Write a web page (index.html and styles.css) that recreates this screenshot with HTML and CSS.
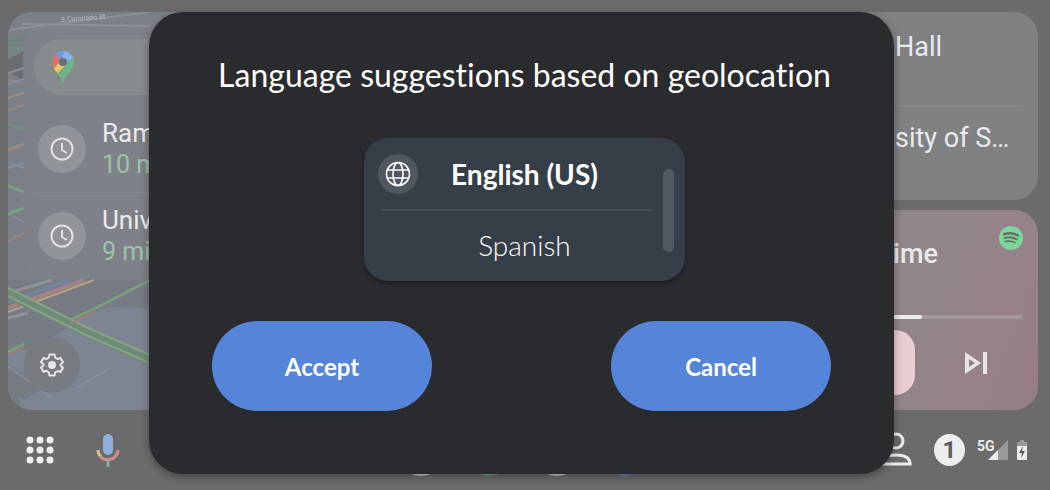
FILE: index.html
```
<!DOCTYPE html>
<html lang="en">
<head>
    <meta charset="UTF-8">
    <meta name="viewport" content="width=device-width, initial-scale=1.0">
    <title>Language suggestions</title>
    <link rel="stylesheet" href="styles.css">
</head>
<body>
    <div class="home">
        <div class="panels">
            <section class="map">
                <svg class="roads" aria-hidden="true" fill="none">
                    <!-- blocks -->
                    <path fill="#7b7f87" d="M0 0H640V270H0z"/>
                    <path fill="#6a6d70" d="M0 47l15-7v28L0 60z"/>
                    <path fill="#72827f" d="M0 28l16-8v18L0 42z"/>
                    <path fill="#777b83" d="M0 268H142V398H0z"/>
                    <path fill="#7e8492" d="M62 314L84 300 104 295 128 296 142 298V398H14L0 352V340L28 336z"/>
                    <path fill="#777b84" d="M0 352l36 24-20 12L0 376z"/>
                    <!-- streets -->
                    <path stroke="#8b9096" stroke-width="2" d="M14 12L142 14M0 18L142 0"/>
                    <path stroke="#708d7f" stroke-width="3" d="M0 36L16 37M0 112l16 5"/>
                    <path stroke="#948e83" stroke-width="2" d="M0 61l16-5M0 86l16-6M0 98l16-5M0 137l16-5"/>
                    <path stroke="#9a827f" stroke-width="2" d="M0 67l16 5M0 139l16-5M0 229l16-8"/>
                    <path stroke="#858c9a" stroke-width="2" d="M0 72l16-5M0 150l16 6M0 156l16-5M4 204l12 6M0 354l44 32M68 376l34-20"/>
                    <path stroke="#76a07e" stroke-width="3" d="M0 174l16 6M0 202l16-6"/>
                    <path stroke="#8d929b" stroke-width="3" d="M0 281L44 268M0 306L20 301"/>
                    <path stroke="#7185a5" stroke-width="3" d="M0 290L62 268"/>
                    <path stroke="#a08485" stroke-width="4" d="M0 296L76 268"/>
                    <path stroke="#b5a47d" stroke-width="2" d="M0 300L86 268"/>
                    <path stroke="#6f8b78" stroke-width="11" d="M0 281L78 320 142 348"/>
                    <path stroke="#83a383" stroke-width="2" d="M0 276L80 316 142 343M0 284L78 323 142 351"/>
                    <path stroke="#a67c7b" stroke-width="2" d="M0 343L16 335M62 312L86 300"/>
                    <path stroke="#77a078" stroke-width="3" d="M0 340L16 332M62 308L92 294 142 268"/>
                    <text class="street" x="53" y="10" transform="rotate(-4 53 10)">S Coronado St</text>
                </svg>
                <div class="places">
                    <button class="search" aria-label="Search maps">
                        <svg width="24" height="34" viewBox="0 0 24 34">
                            <clipPath id="pin"><path d="M12 1a11 11 0 0 1 11 11c0 4-2 7-4.500 10C15.500 25.500 13.500 28 12.500 32q-.5 1-1 0C10.500 28 8.500 25.500 5.500 22 3 19 1 16 1 12A11 11 0 0 1 12 1z"/></clipPath>
                            <g clip-path="url(#pin)">
                                <path fill="#6fb583" d="M0 0h24v34H0z"/>
                                <path fill="#6d9be0" d="M3 0h21v8L12 14 3 5z"/>
                                <path fill="#89b0e9" d="M15 0L24 8l-8 3-5-5z"/>
                                <path fill="#d8736a" d="M0 3l4 1 8 7-9 10H0z"/>
                                <path fill="#e6c565" d="M2 20L10 10l8 6L6 26z"/>
                                <path fill="#6fb583" d="M5 25L23 6v28H5z"/>
                            </g>
                            <circle cx="12" cy="12" r="4" fill="#656d7c"/>
                        </svg>
                    </button>
                    <div class="place">
                        <span class="clock">
                            <svg width="24" height="24" viewBox="0 0 24 24" fill="none" stroke="#dfe1e2" stroke-width="2"><circle cx="12" cy="12" r="10.500"/><path d="M12 6v7l5 3"/></svg>
                        </span>
                        <div>
                            <div class="place-name">Ram</div>
                            <div class="place-time">10 m</div>
                        </div>
                    </div>
                    <div class="place">
                        <span class="clock">
                            <svg width="24" height="24" viewBox="0 0 24 24" fill="none" stroke="#dfe1e2" stroke-width="2"><circle cx="12" cy="12" r="10.500"/><path d="M12 6v7l5 3"/></svg>
                        </span>
                        <div>
                            <div class="place-name">Univ</div>
                            <div class="place-time">9 mi</div>
                        </div>
                    </div>
                </div>
                <button class="settings" aria-label="Settings">
                    <svg width="24" height="24" viewBox="0 0 24 24" fill="none" stroke="#e4e5e7" stroke-width="2" stroke-linejoin="round"><path d="M9.500 1.500h5l.7 3.200 2.300 1.300 3.100-1 2.400 4.200-2.400 2.200v1.200l2.400 2.200-2.400 4.200-3.100-1-2.300 1.300-.7 3.200h-5l-.7-3.200L6.500 17.800l-3.100 1L1 14.600l2.400-2.200v-1.200L1 9.200 3.400 5l3.100 1 2.300-1.300z"/><circle cx="12" cy="12" r="4" fill="#e4e5e7" stroke="none"/></svg>
                </button>
            </section>

            <div class="side">
                <section class="card nearby">
                    <div class="nearby-row">Hall</div>
                    <div class="nearby-row">sity of S…</div>
                </section>
                <section class="card media">
                    <div class="media-head">
                        <div class="song">ime</div>
                        <svg width="24" height="24" viewBox="0 0 24 24" fill="none" stroke="#5f7466" stroke-linecap="round"><circle cx="12" cy="12" r="12" fill="#7fd69b" stroke="none"/><path stroke-width="2.500" d="M5 8.200c5-1.400 10-.9 14 1.300"/><path stroke-width="2" d="M5.500 12c4.500-1.200 8.500-.7 12 1.200"/><path stroke-width="1.700" d="M6 15.500c4-.9 7-.5 10 1.100"/></svg>
                    </div>
                    <progress class="track" value="42" max="100" aria-label="Song position"></progress>
                    <div class="media-controls">
                        <button class="play" aria-label="Play"></button>
                        <button class="next" aria-label="Next song">
                            <svg width="24" height="24" viewBox="0 0 24 24" fill="#e9e5e6"><path fill-rule="evenodd" d="M1 1l16 11L1 23zM5 8v8l6-4z"/><path d="M19 1h4v22h-4z"/></svg>
                        </button>
                    </div>
                </section>
            </div>
        </div>

        <nav class="dock">
            <div class="dock-left">
                <button class="dock-btn" aria-label="All apps">
                    <svg width="28" height="28" viewBox="0 0 28 28" fill="#ededed"><circle cx="4" cy="4" r="3.500"/><circle cx="14" cy="4" r="3.500"/><circle cx="24" cy="4" r="3.500"/><circle cx="4" cy="14" r="3.500"/><circle cx="14" cy="14" r="3.500"/><circle cx="24" cy="14" r="3.500"/><circle cx="4" cy="24" r="3.500"/><circle cx="14" cy="24" r="3.500"/><circle cx="24" cy="24" r="3.500"/></svg>
                </button>
                <button class="dock-btn" aria-label="Assistant">
                    <svg width="24" height="34" viewBox="0 0 24 34" fill="none" stroke-width="3"><rect x="7" y="1" width="10" height="21" rx="5" fill="#91aeda"/><path stroke="#d8c07c" d="M2 17c0 3 1 5 3 7"/><path stroke="#cf8f8a" d="M4 23c4 6 17 5 18-6"/><path stroke="#7cb393" d="M12 28v6"/></svg>
                </button>
            </div>
            <div class="dock-apps">
                <span class="app app-light"></span>
                <span class="app app-green"></span>
                <span class="app app-light"></span>
                <span class="app app-blue"></span>
            </div>
            <div class="dock-status">
                <svg width="34" height="36" viewBox="0 0 34 36" fill="none" stroke="#ececec" stroke-width="3"><circle cx="18" cy="9" r="7"/><path d="M3 32c0-6 6-9 15-9s14 3 14 9z"/></svg>
                <span class="count">1</span>
                <div class="signal">
                    <span class="net">5G</span>
                    <svg width="20" height="20" viewBox="0 0 20 20"><path fill="#999" d="M20 0v20H0z"/><path fill="#ededed" d="M10 10v10H0z"/></svg>
                </div>
                <svg width="10" height="20" viewBox="0 0 10 20"><path fill="#999" d="M3 0h4v2h3v4H0V2h3z"/><path fill="#ededed" d="M0 6h10v13a1 1 0 0 1-1 1H1a1 1 0 0 1-1-1z"/><path fill="#555" d="M6 6L2 13h3l-1 5 4-7H5z"/></svg>
            </div>
        </nav>
    </div>

    <div class="overlay">
        <div class="dialog" role="dialog" aria-labelledby="dialog-title">
            <div class="dialog-body">
                <h1 class="title" id="dialog-title">Language suggestions based on geolocation</h1>
                <div class="languages">
                    <button class="language selected">
                        <span class="globe">
                            <svg width="26" height="26" viewBox="0 0 26 26" fill="none" stroke="#fff" stroke-width="1.600"><circle cx="13" cy="13" r="11.500"/><ellipse cx="13" cy="13" rx="5" ry="11.500"/><path d="M2.500 9h21M2.500 17h21"/></svg>
                        </span>
                        <span class="language-name">English (US)</span>
                    </button>
                    <button class="language">
                        <span class="language-name">Spanish</span>
                    </button>
                    <span class="thumb"></span>
                </div>
            </div>
            <div class="actions">
                <button class="action">Accept</button>
                <button class="action">Cancel</button>
            </div>
        </div>
    </div>
</body>
</html>
```
FILE: styles.css
```
* {
    box-sizing: border-box;
}

body {
    margin: 0;
    background-color: #6b6b6b;
    font-family: Roboto, sans-serif;
    color: #e9eaeb;
}

button {
    border: none;
    padding: 0;
    background: none;
    color: inherit;
    font-family: inherit;
    cursor: pointer;
}

svg {
    display: block;
}

/* home screen behind the dialog */
.home {
    display: flex;
    flex-direction: column;
    min-height: 100vh;
    padding: 12px 12px 0 8px;
}

.panels {
    display: flex;
    flex: 1;
    gap: 10px;
}

.map {
    position: relative;
    flex: 1;
    padding: 15px 0 0 16px;
    border-radius: 24px;
    background-color: #7d8390;
    overflow: hidden;
}

.roads {
    position: absolute;
    top: 0;
    left: 0;
    width: 100%;
    height: 100%;
}

.street {
    font-size: 7px;
    fill: #b9bcc0;
}

.places {
    position: relative;
    padding: 12px 0 0 10px;
    border-radius: 16px;
    background-color: #7e8187;
}

.search {
    display: flex;
    align-items: center;
    width: 100%;
    height: 56px;
    margin-bottom: 10px;
    padding-left: 17px;
    border-radius: 28px;
    background-color: #868b8e;
}

.place {
    display: flex;
    align-items: center;
    gap: 16px;
    height: 87px;
    padding-left: 4px;
}

.place + .place {
    border-top: 1px solid #84878c;
}

.clock {
    display: flex;
    align-items: center;
    justify-content: center;
    width: 48px;
    height: 48px;
    border-radius: 50%;
    background-color: #919498;
}

.place-name,
.place-time {
    font-size: 26px;
    line-height: 32px;
}

.place-time {
    font-size: 25px;
    color: #9fc2aa;
}

.settings {
    position: relative;
    display: flex;
    align-items: center;
    justify-content: center;
    width: 56px;
    height: 56px;
    margin-top: 58px;
    border-radius: 50%;
    background-color: #787b80;
}

.side {
    display: flex;
    flex-direction: column;
    gap: 10px;
    width: 190px;
}

.card {
    border-radius: 24px;
    overflow: hidden;
}

.nearby {
    padding: 4px 15px 0 47px;
    height: 188px;
    background-color: #808183;
}

.nearby-row {
    padding: 13px 0 41px;
    font-size: 27px;
    line-height: 36px;
    white-space: nowrap;
}

.nearby-row + .nearby-row {
    border-top: 1px solid #888989;
}

.media {
    flex: 1;
    padding: 16px 15px 0 0;
    background: linear-gradient(110deg, #8f8788 20%, #928488 50%, #97828a 75%, #957d84);
}

.media-head {
    display: flex;
    justify-content: space-between;
    padding-left: 45px;
}

.song {
    margin-top: 10px;
    font-size: 27px;
    font-weight: 500;
    line-height: 36px;
}

.track {
    display: block;
    width: 100%;
    height: 4px;
    margin-top: 43px;
    border: none;
    appearance: none;
}

.track::-webkit-progress-bar {
    border-radius: 2px;
    background-color: #a4979a;
}

.track::-webkit-progress-value {
    border-radius: 2px;
    background-color: #ececec;
}

.media-controls {
    display: flex;
    align-items: center;
    gap: 49px;
    margin-top: 11px;
}

.play {
    width: 67px;
    height: 65px;
    border-radius: 20px;
    background-color: #e8cdd1;
}

.dock {
    display: grid;
    grid-template-columns: 1fr auto 1fr;
    align-items: center;
    height: 80px;
}

.dock-left {
    display: flex;
    gap: 16px;
    padding-left: 6px;
}

.dock-btn {
    display: flex;
    align-items: center;
    justify-content: center;
    width: 52px;
    height: 52px;
}

.dock-apps {
    display: flex;
    gap: 16px;
}

.app {
    width: 52px;
    height: 52px;
    border-radius: 50%;
}

.app-light {
    background-color: #c4c4c4;
}

.app-green {
    background-color: #63a17c;
}

.app-blue {
    background-color: #5f83b8;
}

.dock-status {
    display: flex;
    align-items: center;
    justify-content: flex-end;
    padding-right: 11px;
}

.count {
    width: 31px;
    height: 32px;
    margin: 0 12px 0 22px;
    border-radius: 50%;
    background-color: #ededed;
    color: #5c5c5c;
    font-size: 24px;
    font-weight: 700;
    line-height: 32px;
    text-align: center;
}

/* the network name sits on the corner of the signal bars */
.signal {
    position: relative;
    margin-right: 9px;
    padding-left: 11px;
}

.net {
    position: absolute;
    top: -2px;
    left: 0;
    color: #ededed;
    font-size: 14px;
    font-weight: 700;
    line-height: 16px;
}

/* dialog */
.overlay {
    position: absolute;
    top: 0;
    left: 0;
    width: 100%;
    padding: 12px 156px 16px 149px;
}

.dialog {
    padding: 44px 63px 63px;
    border-radius: 34px;
    background-color: #2a2b2e;
    box-shadow: 0 3px 8px rgba(0, 0, 0, 0.35);
    color: #fff;
    font-family: Lato, sans-serif;
    font-variant-ligatures: none;
}

.dialog-body {
    display: flex;
    flex-direction: column;
    align-items: center;
    gap: 44px;
    padding-left: 6px;
}

.title {
    margin: 0;
    font-size: 32px;
    font-weight: 400;
    line-height: 38px;
    text-align: center;
    white-space: nowrap;
}

.languages {
    position: relative;
    width: 321px;
    padding: 0 14px 2px;
    border-radius: 24px;
    background-color: #363f47;
    box-shadow: 0 3px 4px rgba(0, 0, 0, 0.3);
}

.language {
    display: grid;
    grid-template-columns: 40px 1fr 40px;
    align-items: center;
    width: 100%;
    height: 68px;
    font-size: 28px;
    font-weight: 300;
}

.language.selected {
    grid-template-rows: 1fr 2px;
    height: 73px;
    font-weight: 700;
}

.language.selected::after {
    content: "";
    grid-column: 1 / 4;
    height: 2px;
    margin: 0 19px 0 3px;
    background-color: #454d57;
}

.language-name {
    grid-column: 2;
    white-space: nowrap;
}

.globe {
    display: flex;
    align-items: center;
    justify-content: center;
    width: 40px;
    height: 40px;
    border-radius: 50%;
    background-color: #50575e;
}

.thumb {
    position: absolute;
    top: 31px;
    right: 11px;
    width: 11px;
    height: 83px;
    border-radius: 6px;
    background-color: #51585f;
}

.actions {
    display: flex;
    justify-content: space-between;
    margin-top: 40px;
}

.action {
    width: 220px;
    height: 90px;
    border-radius: 45px;
    background-color: #5585d8;
    font-size: 24px;
    font-weight: 700;
}

.action:hover {
    background-color: #4a78c8;
}
```
